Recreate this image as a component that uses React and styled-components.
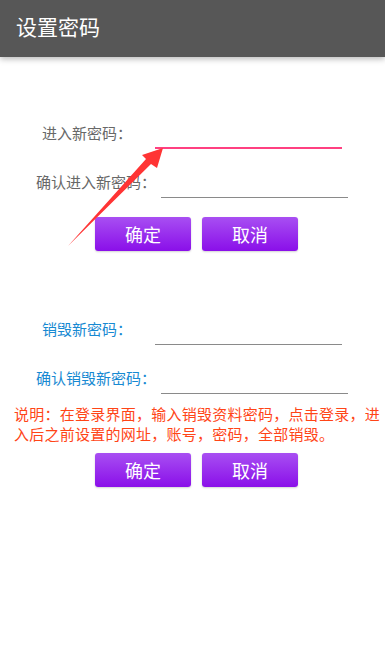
import React from 'react'
import styled, { createGlobalStyle } from 'styled-components'

const Global = createGlobalStyle`
  html, body { margin: 0; padding: 0; background: #fff; }
  body { font-family: "Noto Sans CJK SC", "Noto Sans", sans-serif; }
`

const Screen = styled.div`
  position: relative;
  width: 385px;
  height: 665px;
  background: #fff;
  overflow: hidden;
`

const AppBar = styled.div`
  height: 57px;
  background: #575757;
  display: flex;
  align-items: center;
  padding-left: 16px;
  box-shadow: 0 2px 6px rgba(0, 0, 0, 0.28);
  position: relative;
  z-index: 1;
`

const Title = styled.h1`
  margin: 0;
  font-size: 21px;
  font-weight: 400;
  color: #fff;
  line-height: 1;
  margin-top: -5px;
`

const Section = styled.div`
  display: flex;
  flex-direction: column;
  padding-top: ${p => p.top}px;
`

const Row = styled.div`
  display: flex;
  align-items: flex-end;
  padding-left: ${p => p.left}px;
  margin-top: ${p => p.gap || 0}px;
`

const Label = styled.span`
  width: ${p => p.width}px;
  font-size: 15px;
  line-height: 20px;
  color: ${p => (p.tone === 'blue' ? '#1789d2' : '#686868')};
  margin-bottom: 6px;
  white-space: nowrap;
`

const Field = styled.div`
  width: 187px;
  height: 26px;
  border-bottom: ${p => (p.focused ? '2px solid #ff4081' : '1.5px solid #8a8a8a')};
`

const Buttons = styled.div`
  display: flex;
  gap: 11px;
  padding-left: 95px;
  margin-top: ${p => p.gap}px;
`

const Button = styled.button`
  width: 96px;
  height: 34px;
  border: none;
  border-radius: 3px;
  background: linear-gradient(#a84ff2, #8a0fe9);
  box-shadow: 0 1px 2px rgba(0, 0, 0, 0.18);
  color: #fff;
  font-family: inherit;
  font-size: 18px;
  line-height: 1;
  padding: 0;
`

const Note = styled.p`
  margin: 10px 0 0;
  padding: 0 0 0 14px;
  font-size: 15px;
  letter-spacing: 0.25px;
  line-height: 20px;
  color: #ff4517;
`

const Arrow = styled.svg`
  position: absolute;
  left: 0;
  top: 0;
  pointer-events: none;
`

export default function App() {
  return (
    <Screen>
      <Global />
      <AppBar>
        <Title>设置密码</Title>
      </AppBar>

      <Section top={64}>
        <Row left={42}>
          <Label width={113}>进入新密码：</Label>
          <Field focused />
        </Row>
        <Row left={36} gap={22}>
          <Label width={125}>确认进入新密码：</Label>
          <Field />
        </Row>
        <Buttons gap={19}>
          <Button>确定</Button>
          <Button>取消</Button>
        </Buttons>
      </Section>

      <Section top={67}>
        <Row left={42}>
          <Label width={113} tone="blue">销毁新密码：</Label>
          <Field />
        </Row>
        <Row left={36} gap={22}>
          <Label width={125} tone="blue">确认销毁新密码：</Label>
          <Field />
        </Row>
        <Note>说明：在登录界面，输入销毁资料密码，点击登录，进入后之前设置的网址，账号，密码，全部销毁。</Note>
        <Buttons gap={9}>
          <Button>确定</Button>
          <Button>取消</Button>
        </Buttons>
      </Section>

      <Arrow width="385" height="665" viewBox="0 0 385 665">
        <polygon
          points="163,148 142,155 146,159 68,246 151,164 157,168"
          fill="#ff3434"
        />
      </Arrow>
    </Screen>
  )
}
